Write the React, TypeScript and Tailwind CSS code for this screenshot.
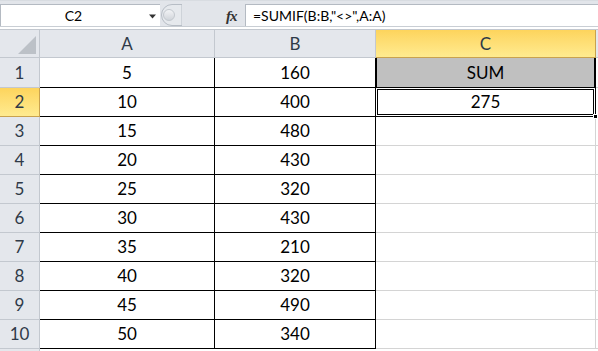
const rows: [number, number][] = [
  [5, 160],
  [10, 400],
  [15, 480],
  [20, 430],
  [25, 320],
  [30, 430],
  [35, 210],
  [40, 320],
  [45, 490],
  [50, 340],
];

const hdr = "bg-[#e4e7ec] border-[#c3c8cf]";
const selHdr = "bg-gradient-to-b from-[#fdd45c] to-[#ffeb8f] border-[#c9a24e]";

function FormulaBar() {
  return (
    <div className="flex flex-col">
      <div className="flex h-[26px] bg-[#e2e5ea] border-t border-[#d8dce1] pt-[3px]">
        {/* name box */}
        <div className="relative flex h-[22px] w-[160px] items-center justify-center bg-white border-t border-l border-[#b4bac2] text-[14px] text-black">
          <span className="pr-[14px]">C2</span>
          <svg className="absolute left-[147px] top-[9px]" width="9" height="5" viewBox="0 0 9 5">
            <path d="M1 0.5 L8 0.5 L4.5 4.5 Z" fill="#333" />
          </svg>
        </div>
        {/* gripper + fx */}
        <div className="relative flex w-[85px] items-center">
          <svg className="absolute left-0 top-0" width="22" height="22" viewBox="0 0 22 22">
            <defs>
              <linearGradient id="g" x1="0" y1="0" x2="0" y2="1">
                <stop offset="0" stopColor="#f4f5f7" />
                <stop offset="1" stopColor="#cfd3d9" />
              </linearGradient>
            </defs>
            <path d="M12 0.5 A10.5 10.5 0 0 0 12 21.5 L22 21.5 L22 0.5 Z" fill="#e6e9ed" stroke="#b7bdc5" />
            <circle cx="9" cy="11" r="5.5" fill="url(#g)" stroke="#c3c8ce" />
          </svg>
          <span className="absolute left-[66px] top-[1px] font-['Liberation_Serif',serif] italic font-bold text-[15px] text-[#333] tracking-[-1px]">
            fx
          </span>
        </div>
        {/* formula */}
        <div className="flex h-[22px] flex-1 items-center bg-white border-t border-l border-[#b4bac2] pl-[7px] text-[14px] text-black">
          =SUMIF(B:B,"&lt;&gt;",A:A)
        </div>
      </div>
      <div className="h-[3px] bg-white border-t border-[#c9ced4]" />
    </div>
  );
}

function HeaderRow() {
  return (
    <div className="flex h-[29px] border-t border-[#c3c8cf] text-[17px] text-[#2f3a48]">
      <div className={`relative w-[40px] border-r border-b ${hdr}`}>
        <svg className="absolute right-[3px] bottom-[3px]" width="18" height="18" viewBox="0 0 18 18">
          <path d="M18 0 L18 18 L0 18 Z" fill="#bcc1c7" />
        </svg>
      </div>
      <div className={`flex w-[175px] items-center justify-center border-r border-b ${hdr}`}>A</div>
      <div className={`flex w-[161px] items-center justify-center border-r border-b ${hdr}`}>B</div>
      <div className={`flex w-[220px] items-center justify-center border-r border-b ${selHdr}`}>C</div>
      <div className={`flex-1 border-b ${hdr}`} />
    </div>
  );
}

function CellC({ i }: { i: number }) {
  if (i === 0)
    return (
      <div className="flex w-[220px] items-center justify-center bg-[#c0c0c0] border-l border-r-2 border-b border-black">
        SUM
      </div>
    );
  if (i === 1)
    return (
      <div className="relative flex w-[220px] items-center justify-center border-r border-b border-black">
        <div className="absolute inset-[1px] border border-black" />
        <span className="relative">275</span>
        <div className="absolute right-[-3px] bottom-[-3px] h-[5px] w-[5px] bg-black border border-white" />
      </div>
    );
  return <div className="w-[220px] border-r border-b border-[#d4d4d4]" />;
}

export default function App() {
  return (
    <div className="h-[351px] w-[598px] overflow-hidden bg-white font-['Lato',sans-serif]">
      <FormulaBar />
      <HeaderRow />
      {rows.map(([a, b], i) => (
        <div key={i} className={`flex ${i === 0 ? "h-[30px]" : "h-[29px]"} text-[17px] text-black`}>
          <div
            className={`flex w-[40px] items-center justify-center border-r border-b text-[#2f3a48] ${
              i === 1 ? selHdr : hdr
            }`}
          >
            {i + 1}
          </div>
          <div className="flex w-[175px] items-center justify-center border-r border-b border-black">{a}</div>
          <div className="flex w-[161px] items-center justify-center border-r border-b border-black">{b}</div>
          <CellC i={i} />
          <div className="flex-1 border-b border-[#d4d4d4]" />
        </div>
      ))}
      <div className="flex h-[29px]">
        <div className={`w-[40px] border-r ${hdr}`} />
        <div className="flex-1" />
      </div>
    </div>
  );
}
